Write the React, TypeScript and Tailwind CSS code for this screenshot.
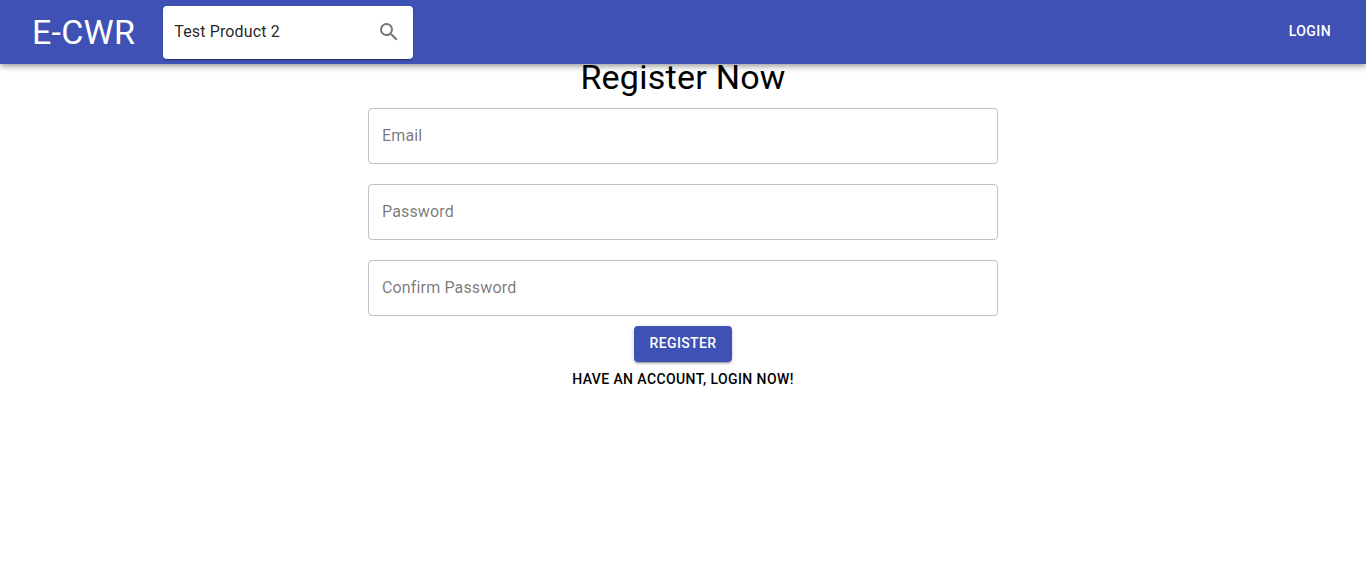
import { useState } from "react";
import { MdSearch } from "react-icons/md";

const fields = [
  { id: "email", label: "Email", type: "email" },
  { id: "password", label: "Password", type: "password" },
  { id: "confirm", label: "Confirm Password", type: "password" },
];

function Header() {
  const [query, setQuery] = useState("Test Product 2");
  return (
    <header className="relative flex h-16 items-center bg-[#3f51b5] pr-6 pl-8 text-white shadow-[0_2px_4px_-1px_rgba(0,0,0,0.2),0_4px_5px_0_rgba(0,0,0,0.14),0_1px_10px_0_rgba(0,0,0,0.12)]">
      <a href="#home" className="text-[34px] leading-[42px] tracking-[0.25px]">
        E-CWR
      </a>
      <form
        role="search"
        onSubmit={(e) => e.preventDefault()}
        className="mt-px ml-7 flex h-[53px] w-[250px] items-center rounded-sm bg-white pr-3 pb-[2px] pl-[11px] shadow-[0_2px_1px_-1px_rgba(0,0,0,0.2),0_1px_1px_0_rgba(0,0,0,0.14),0_1px_3px_0_rgba(0,0,0,0.12)]"
      >
        <input
          aria-label="Search products"
          value={query}
          onChange={(e) => setQuery(e.target.value)}
          className="min-w-0 flex-1 bg-transparent text-base tracking-[0.15px] text-black/87 outline-none"
        />
        <button type="submit" aria-label="Search" className="text-black/54">
          <MdSearch size={24} />
        </button>
      </form>
      <a
        href="#login"
        className="ml-auto px-[11px] pb-[2px] text-sm leading-6 font-medium tracking-[0.4px] uppercase"
      >
        Login
      </a>
    </header>
  );
}

export default function App() {
  return (
    <div className="min-h-screen bg-white font-['Roboto',sans-serif] text-black">
      <Header />
      <main className="mx-auto flex max-w-[630px] flex-col items-center">
        <h1 className="-mt-2 text-[34px] leading-[42px] tracking-[0.25px]">Register Now</h1>
        <form onSubmit={(e) => e.preventDefault()} className="mt-[10px] flex w-full flex-col items-center">
          <div className="flex w-full flex-col gap-5">
            {fields.map((f) => (
              <input
                key={f.id}
                id={f.id}
                type={f.type}
                aria-label={f.label}
                placeholder={f.label}
                className="h-14 w-full rounded-sm border border-black/23 px-[13px] pb-[2px] text-base tracking-[0.15px] placeholder:text-black/54 focus:border-[#3f51b5] focus:outline-none"
              />
            ))}
          </div>
          <button
            type="submit"
            className="mt-[10px] h-9 rounded-sm bg-[#3f51b5] px-[15px] pb-[2px] text-sm font-medium tracking-[0.4px] text-white uppercase shadow-[0_3px_1px_-2px_rgba(0,0,0,0.2),0_2px_2px_0_rgba(0,0,0,0.14),0_1px_5px_0_rgba(0,0,0,0.12)]"
          >
            Register
          </button>
        </form>
        <a href="#login" className="mt-[5px] text-sm leading-6 font-medium tracking-[0.4px] uppercase">
          Have an account, login now!
        </a>
      </main>
    </div>
  );
}
